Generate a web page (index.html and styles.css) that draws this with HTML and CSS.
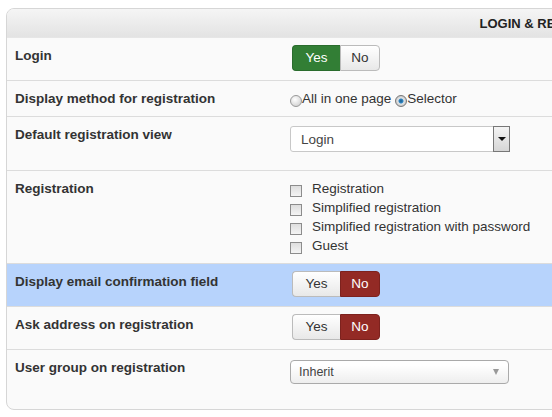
FILE: index.html
```html
<!DOCTYPE html>
<html lang="en">
<head>
    <meta charset="UTF-8">
    <title>Login &amp; Registration</title>
    <link rel="stylesheet" href="styles.css">
</head>
<body>
    <div class="panel">
        <div class="panel-head">LOGIN &amp; REGISTRATION</div>

        <div class="row">
            <div class="label">Login</div>
            <div class="value">
                <div class="yesno">
                    <span class="btn on-yes">Yes</span><span class="btn">No</span>
                </div>
            </div>
        </div>

        <div class="row">
            <div class="label">Display method for registration</div>
            <div class="value radios">
                <span class="radio"></span>All in one page
                <span class="radio checked"></span>Selector
            </div>
        </div>

        <div class="row">
            <div class="label">Default registration view</div>
            <div class="value">
                <div class="select-native">
                    <span class="select-text">Login</span>
                    <span class="select-btn"><i class="tri"></i></span>
                </div>
            </div>
        </div>

        <div class="row">
            <div class="label">Registration</div>
            <div class="value">
                <ul class="checks">
                    <li><span class="check"></span>Registration</li>
                    <li><span class="check"></span>Simplified registration</li>
                    <li><span class="check"></span>Simplified registration with password</li>
                    <li><span class="check"></span>Guest</li>
                </ul>
            </div>
        </div>

        <div class="row highlight">
            <div class="label">Display email confirmation field</div>
            <div class="value">
                <div class="yesno">
                    <span class="btn">Yes</span><span class="btn on-no">No</span>
                </div>
            </div>
        </div>

        <div class="row">
            <div class="label">Ask address on registration</div>
            <div class="value">
                <div class="yesno">
                    <span class="btn">Yes</span><span class="btn on-no">No</span>
                </div>
            </div>
        </div>

        <div class="row last">
            <div class="label">User group on registration</div>
            <div class="value">
                <div class="chzn">
                    <span>Inherit</span>
                    <i class="chzn-arrow"></i>
                </div>
            </div>
        </div>
    </div>
</body>
</html>
```

FILE: styles.css
```css
body {
    margin: 8px 0 0 6px;
    background: #fff;
    color: #333;
    font-family: "Liberation Sans", Arial, sans-serif;
    font-size: 13.5px;
    overflow: hidden;
}
.panel {
    width: 1100px;
    background: #fafafa;
    border: 1px solid #d6d6d6;
    border-radius: 8px;
    overflow: hidden;
}
.panel-head {
    height: 28px;
    line-height: 29px;
    text-align: center;
    font-weight: bold;
    font-size: 13px;
    color: #222;
    background: linear-gradient(#f5f5f5, #e3e3e3);
    border-bottom: 1px solid #e6e6e6;
}
.row {
    display: flex;
    padding: 8px 8px;
    border-bottom: 1px solid #dcdcdc;
}
.row.highlight {
    background: #b7d3fc;
}
.row.last {
    border-bottom: 0;
    padding-bottom: 25px;
}
.label {
    width: 275px;
    flex: none;
    font-weight: bold;
    line-height: 19px;
    color: #333;
}
.value {
    line-height: 19px;
}

/* yes / no button group */
.yesno {
    display: inline-flex;
    margin: -1px 0 1px 2px;
}
.btn {
    display: inline-block;
    box-sizing: border-box;
    height: 26px;
    line-height: 24px;
    text-align: center;
    background: linear-gradient(#ffffff, #e8e8e8);
    border: 1px solid #bbb;
    color: #333;
    font-size: 13.5px;
}
.btn:first-child {
    width: 48px;
    border-radius: 4px 0 0 4px;
    border-right: 0;
}
.btn:last-child {
    width: 40px;
    border-radius: 0 4px 4px 0;
}
.btn.on-yes {
    background: #327e35;
    border-color: #2a6c2d;
    color: #fff;
}
.btn.on-no {
    background: #932a25;
    border-color: #7d221e;
    color: #fff;
}

/* radios */
.radios {
    display: flex;
    align-items: center;
}
.radio {
    width: 10px;
    height: 10px;
    border: 1px solid #999;
    border-radius: 50%;
    background: radial-gradient(circle at 40% 35%, #fff, #c8c8c8);
    margin-top: 5px;
}
.radio.checked {
    margin-left: 4px;
    background: radial-gradient(circle, #1c5d8c 0, #2f86c4 2px, #e6e6e6 3px, #c8c8c8 5px);
    border-color: #777;
}

/* old style select */
.select-native {
    width: 218px;
    height: 24px;
    margin: 1px 0 10px 0;
    display: flex;
    background: #fff;
    border: 1px solid #c8c8c8;
    border-radius: 3px 0 0 3px;
}
.select-text {
    flex: 1;
    padding-left: 10px;
    line-height: 25px;
    color: #444;
}
.select-btn {
    width: 15px;
    display: flex;
    align-items: center;
    justify-content: center;
    background: linear-gradient(#f4f4f4, #d6d6d6);
    border: 1px solid #777;
    margin: -1px -1px -1px 0;
}
.tri {
    width: 0;
    height: 0;
    border-left: 4px solid transparent;
    border-right: 4px solid transparent;
    border-top: 4px solid #111;
}

/* checkboxes */
.checks {
    list-style: none;
    margin: 0;
    padding: 0;
}
.checks li {
    display: flex;
    align-items: center;
    height: 19px;
    line-height: 19px;
    color: #333;
}
.check {
    width: 10px;
    height: 10px;
    border: 1px solid #8c8c8c;
    background: linear-gradient(#dedede, #f4f4f4);
    margin: 4px 10px 0 0;
}

/* chosen style select */
.chzn {
    width: 201px;
    height: 22px;
    margin-top: 2px;
    padding: 0 8px;
    display: flex;
    align-items: center;
    justify-content: space-between;
    background: linear-gradient(#ffffff 20%, #eeeeee);
    border: 1px solid #aaa;
    border-radius: 4px;
    color: #444;
    font-size: 12.5px;
    box-shadow: 0 1px 0 #fff inset;
}
.chzn-arrow {
    width: 0;
    height: 0;
    border-left: 3.5px solid transparent;
    border-right: 3.5px solid transparent;
    border-top: 6px solid #999;
    margin-right: 1px;
}
```
